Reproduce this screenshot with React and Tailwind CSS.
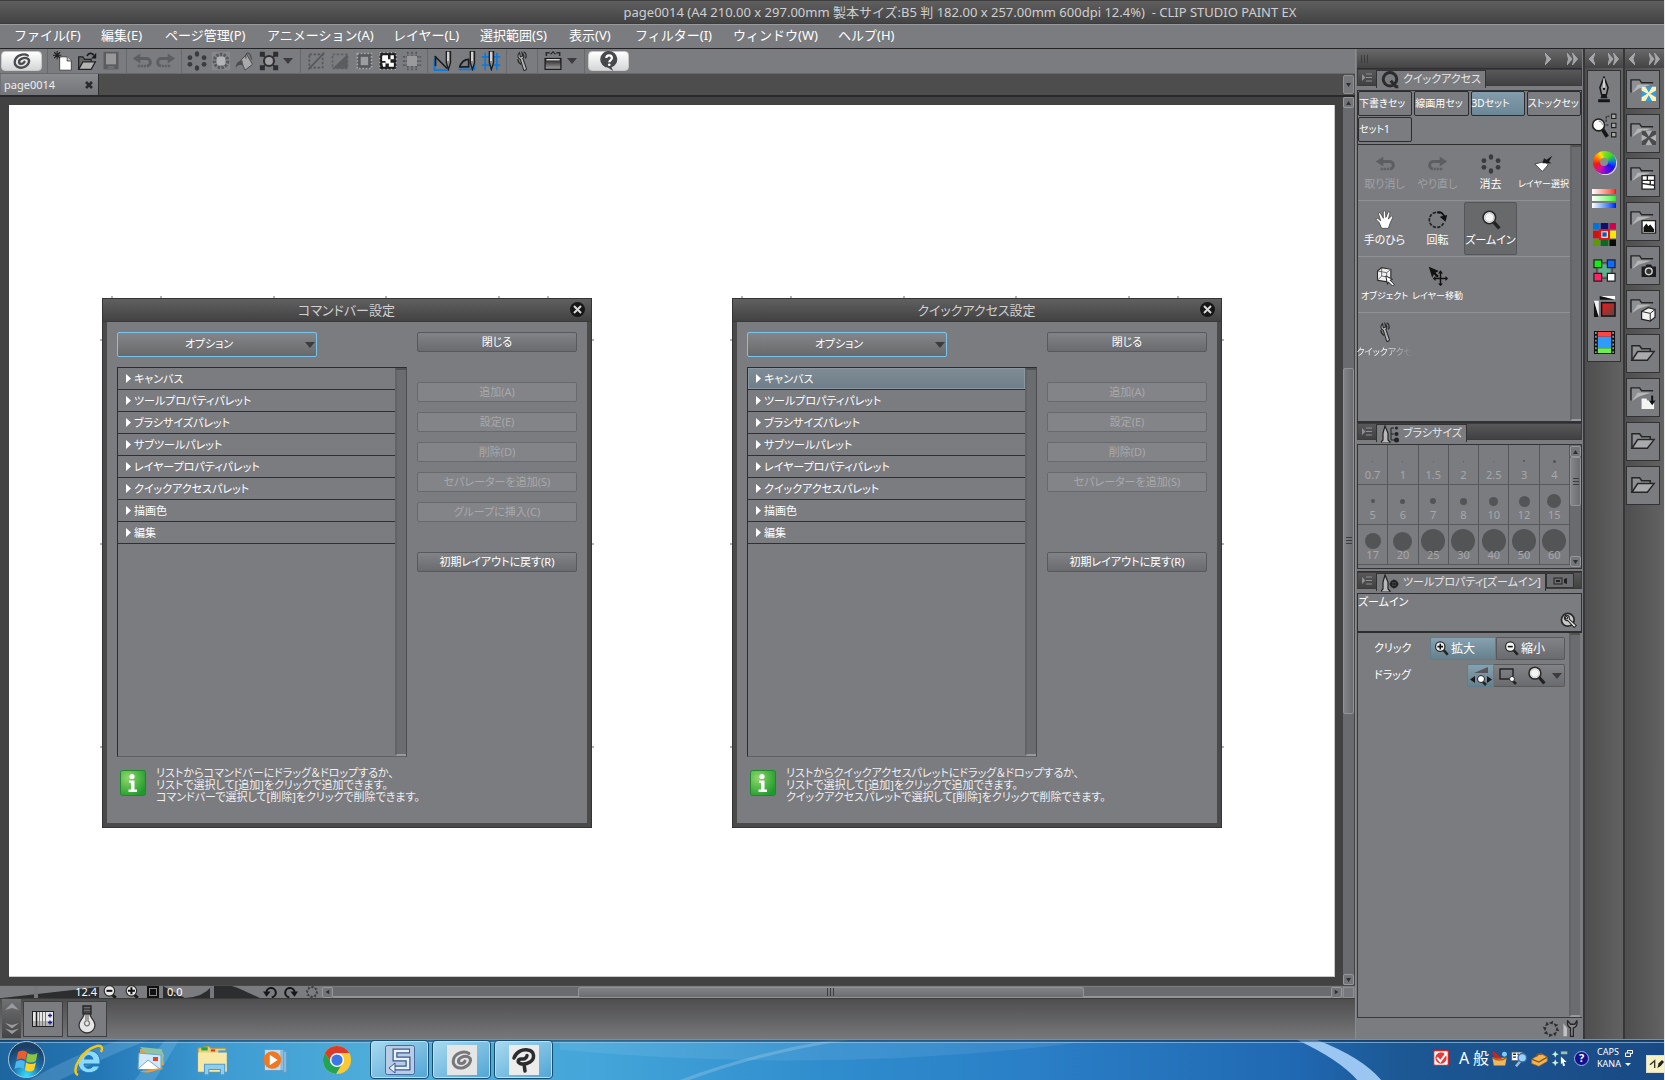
import React from "react";

/* ---------- shared pieces ---------- */

const Svg = ({ s = 20, w, h, vb = "0 0 24 24", children, className = "" }) => (
  <svg width={w || s} height={h || s} viewBox={vb} fill="none" className={"shrink-0 " + className} aria-hidden="true">
    {children}
  </svg>
);

const Caret = ({ className = "text-[#3c3c3e]" }) => (
  <Svg w={10} h={6} vb="0 0 10 6" className={className}>
    <path d="M0 0h10L5 6z" fill="currentColor" />
  </Svg>
);

/* ---------- toolbar icons ---------- */

const Swirl = ({ s = 20, c = "#4a4b4e" }) => (
  <Svg s={s}>
    <path
      d="M19 5.500C14 2 5 5.500 3.500 11.500 2 18 8 21.500 14 19.500c6-2 8.500-8.500 4.500-10.500C14.500 7 8 10 8.500 13.500c.4 2.700 5 2.700 6.500-.5"
      stroke={c}
      strokeWidth="2.800"
      strokeLinecap="round"
    />
  </Svg>
);
const NewIcon = () => (
  <Svg>
    <path d="M8 7h9l5 5v11H8z" fill="#fff" stroke="#333" strokeWidth="1" />
    <path d="M17 7v5h5" fill="#ccc" stroke="#333" />
    <path d="M5 0v10M0 5h10M1.500 1.500l7 7M8.500 1.500l-7 7" stroke="#1e1e1e" strokeWidth="1.300" />
  </Svg>
);
const OpenIcon = () => (
  <Svg>
    <path d="M2 22V7h5l2 3h8v3" fill="#666" stroke="#222" strokeWidth="1.500" />
    <path d="M2 22l5-9h15l-5 9z" fill="#b4b4b4" stroke="#222" strokeWidth="1.500" />
    <path d="M12 6c2-4 6-4 8-1" stroke="#1a1a1a" strokeWidth="2" />
    <path d="M23 2v7h-6z" fill="#1a1a1a" />
  </Svg>
);
const SaveIcon = () => (
  <Svg>
    <path d="M3 1h18v21H3z" fill="#5c5c5f" />
    <path d="M6 3h12v13H6z" fill="#98989b" />
    <path d="M8 18h8v4H8z" fill="#6f6f72" />
  </Svg>
);
const UndoIcon = ({ flip = false }) => (
  <Svg className={flip ? "-scale-x-100" : ""}>
    <path d="M8 9h9a4.500 4.500 0 0 1 1 9" stroke="#5d5e61" strokeWidth="3.500" />
    <path d="M17 18H6" stroke="#5d5e61" strokeWidth="3" strokeDasharray="2.500 1" />
    <path d="M1 9l9-6v12z" fill="#5d5e61" />
  </Svg>
);
const DotsIcon = ({ c = "#3b3b3d", s = 20 }) => (
  <Svg s={s}>
    <g fill={c}>
      <ellipse cx="12" cy="3.500" rx="2.600" ry="3.300" />
      <ellipse cx="12" cy="20.500" rx="2.600" ry="3.300" />
      <circle cx="3.500" cy="8" r="2.900" />
      <circle cx="20.500" cy="8" r="2.900" />
      <circle cx="3.500" cy="16" r="2.900" />
      <circle cx="20.500" cy="16" r="2.900" />
    </g>
  </Svg>
);
const OuterIcon = () => (
  <Svg>
    <rect x="1" y="1" width="22" height="22" fill="#88898c" />
    <circle cx="12" cy="12" r="8" stroke="#5a5b5e" strokeWidth="4" strokeDasharray="3 1.500" />
    <rect x="7" y="7" width="10" height="10" rx="2" fill="#b4b4b6" />
  </Svg>
);
const FillIcon = () => (
  <Svg>
    <path d="M7 11l7-7 7 12-9 7z" fill="#a9a9ab" stroke="#4d4d50" strokeWidth="1.200" />
    <path d="M13 9C12 3 15 1 18 4l2 6" stroke="#4d4d50" strokeWidth="1.500" />
    <path d="M9 11C3 12 1 15 1 20c3-4 5-4 8-3z" fill="#4d4d50" />
  </Svg>
);
const TransformIcon = () => (
  <Svg>
    <circle cx="12" cy="12" r="6" fill="#a0a0a2" stroke="#2f2f31" strokeWidth="2.500" />
    <path d="M7 7L3 3M17 7l4-4M7 17l-4 4M17 17l4 4" stroke="#2f2f31" strokeWidth="2" />
    <g fill="#2f2f31">
      <path d="M1 1h6v6H1zM17 1h6v6h-6zM1 17h6v6H1zM17 17h6v6h-6z" />
    </g>
  </Svg>
);
const DeselIcon = () => (
  <Svg>
    <rect x="4" y="4" width="16" height="16" stroke="#57585b" strokeWidth="2" strokeDasharray="3 2" />
    <path d="M3 22L22 2" stroke="#57585b" strokeWidth="2" />
  </Svg>
);
const InvIcon = () => (
  <Svg>
    <rect x="3" y="4" width="18" height="17" stroke="#606164" strokeWidth="2" strokeDasharray="3 2" />
    <path d="M3 21L21 4v17z" fill="#5b5c5f" />
  </Svg>
);
const DashSq = () => (
  <Svg>
    <rect x="4" y="3" width="17" height="18" fill="#58595c" />
    <rect x="4" y="3" width="17" height="18" stroke="#a5a5a7" strokeWidth="2" strokeDasharray="2 2" />
    <rect x="8" y="7" width="9" height="10" fill="#9d9d9f" />
  </Svg>
);
const MaskIcon = () => (
  <Svg>
    <rect x="2" y="2" width="20" height="20" rx="2" fill="#1f1f20" />
    <path d="M6 5h6v5h3v4h4v5h-6v-4H9v-3H5V6z" fill="#fff" />
    <path d="M15 5h4v5h-4zM5 14h4v5H6z" fill="#fff" />
    <rect x="2" y="2" width="20" height="20" stroke="#b8b9bb" strokeWidth="1.500" strokeDasharray="1.500 3" />
  </Svg>
);
const CropIcon = () => (
  <Svg>
    <path d="M7 1v22M12 1v22M17 1v22M1 7h22M1 12h22M1 17h22" stroke="#4d4d50" strokeWidth="1.500" strokeDasharray="3 1" />
    <rect x="6" y="6" width="12" height="12" fill="#9a9a9c" />
  </Svg>
);
const Nib = ({ x = 0 }) => (
  <g transform={`translate(${x} 0)`}>
    <path d="M16 0h5v14l-2.500 8L16 14z" fill="#8b8b8e" stroke="#1c1c1e" strokeWidth="1.600" />
    <path d="M18 1v11" stroke="#fff" strokeWidth="1.500" />
  </g>
);
const RulerSnap = () => (
  <Svg>
    <path d="M2 9v14h16" stroke="#0b7be0" strokeWidth="2.500" />
    <path d="M3 6v12M2 6l15 15" stroke="#1c1c1e" strokeWidth="2" />
    <Nib />
  </Svg>
);
const CurveSnap = () => (
  <Svg>
    <path d="M2 22h19V14" stroke="#0b7be0" strokeWidth="2" />
    <path d="M3 20C5 13 8 10 14 10v9H4" stroke="#1c1c1e" strokeWidth="2" />
    <Nib />
  </Svg>
);
const GridSnap = () => (
  <Svg>
    <path d="M5 2v21M12 2v21M19 2v21M1 7h22M1 17h22" stroke="#0b7be0" strokeWidth="2" />
    <Nib x={-6} />
  </Svg>
);
const QuickTool = () => (
  <Svg>
    <path d="M9 2c-3 3-2 7 1 8l4 13c2 1 4-1 3-3L13 9c2-2 1-5-1-7l1 4-3 1z" fill="#b7b7b9" stroke="#2a2a2c" strokeWidth="1.300" />
    <path d="M14 1c3 1 4 5 2 8M7 10c0 3 2 5 4 6" stroke="#2a2a2c" strokeWidth="1.500" />
  </Svg>
);
const PaletteIcon = () => (
  <Svg>
    <defs>
      <linearGradient id="pal" x1="0" y1="0" x2="0" y2="1">
        <stop stopColor="#161616" />
        <stop offset="1" stopColor="#a5a5a5" />
      </linearGradient>
    </defs>
    <path d="M4 6V2h4M16 2h4v4" stroke="#29292b" strokeWidth="1.800" />
    <path d="M9 4l3-3 3 3" stroke="#29292b" strokeWidth="1.500" />
    <rect x="2.500" y="9" width="19" height="13" fill="url(#pal)" stroke="#1c1c1c" strokeWidth="1.500" />
    <path d="M4 10.500h16" stroke="#eee" strokeWidth="1.500" />
  </Svg>
);
const HelpIcon = () => (
  <Svg s={20}>
    <path d="M12 0a10 10 0 0 1 3 19.500L17 24l-6-4A10 10 0 0 1 12 0z" fill="#48494c" />
    <path d="M8.800 8.500c0-4.300 6.700-4.300 6.700 0 0 2.500-3 2.300-3.200 5" stroke="#fff" strokeWidth="2.700" />
    <circle cx="12.300" cy="16.500" r="1.600" fill="#fff" />
  </Svg>
);

const toolbar = [
  { sep: 1 },
  { n: "新規", i: <NewIcon /> },
  { n: "開く", i: <OpenIcon /> },
  { n: "保存", i: <SaveIcon /> },
  { sep: 1 },
  { n: "取り消し", i: <UndoIcon /> },
  { n: "やり直し", i: <UndoIcon flip /> },
  { sep: 1 },
  { n: "消去", i: <DotsIcon /> },
  { n: "選択範囲外を消去", i: <OuterIcon /> },
  { n: "塗りつぶし", i: <FillIcon /> },
  { n: "変形", i: <TransformIcon />, caret: 1 },
  { sep: 1 },
  { n: "選択を解除", i: <DeselIcon /> },
  { n: "選択範囲を反転", i: <InvIcon /> },
  { n: "選択範囲の境界線", i: <DashSq /> },
  { n: "クイックマスク", i: <MaskIcon /> },
  { n: "選択範囲を拡張", i: <CropIcon /> },
  { sep: 1 },
  { n: "定規にスナップ", i: <RulerSnap /> },
  { n: "特殊定規にスナップ", i: <CurveSnap /> },
  { n: "グリッドにスナップ", i: <GridSnap /> },
  { sep: 1 },
  { n: "クイックアクセス設定", i: <QuickTool /> },
  { sep: 1 },
  { n: "パレット表示", i: <PaletteIcon />, caret: 1 },
  { sep: 1 },
];

const menus = [
  ["ファイル(F)", "w-[87px]"],
  ["編集(E)", "w-16"],
  ["ページ管理(P)", "w-[102px]"],
  ["アニメーション(A)", "w-[126px]"],
  ["レイヤー(L)", "w-[87px]"],
  ["選択範囲(S)", "w-[89px]"],
  ["表示(V)", "w-[66px]"],
  ["フィルター(I)", "w-[98px]"],
  ["ウィンドウ(W)", "w-[105px]"],
  ["ヘルプ(H)", "w-20"],
];

function Toolbar() {
  return (
    <div className="flex h-[25px] items-center border-b border-[#68696c] bg-[#7b7c80] pl-px">
      <button aria-label="CLIP STUDIO" className="flex h-5 w-[41px] items-center justify-center rounded-sm border border-[#c8c8c8] bg-gradient-to-b from-white to-[#d5d6d8]">
        <Swirl />
      </button>
      <div className="flex items-center pl-0.5">
        {toolbar.map((t, k) =>
          t.sep ? (
            <span key={k} className="mx-[3px] h-6 w-px bg-[#68696c]" />
          ) : (
            <button key={k} aria-label={t.n} className={t.caret ? "flex h-6 w-10 items-center gap-1 pl-0.5" : "flex h-6 w-6 items-center justify-center"}>
              {t.i}
              {t.caret && <Caret />}
            </button>
          )
        )}
      </div>
      <button aria-label="ヘルプ" className="flex h-5 w-[41px] items-center justify-center rounded-sm border border-[#c8c8c8] bg-gradient-to-b from-white to-[#d5d6d8]">
        <HelpIcon />
      </button>
    </div>
  );
}

/* ---------- scroll bar parts ---------- */

const arrowRot = { up: "rotate-180", down: "", left: "rotate-90", right: "-rotate-90" };
const ScrollBtn = ({ dir, label }) => (
  <button aria-label={label} className="flex h-[11px] w-[11px] shrink-0 items-center justify-center rounded-xs border border-[#97989b] bg-[#747578]">
    <Svg w={5} h={4} vb="0 0 5 4" className={arrowRot[dir]}>
      <path d="M0 0h5L2.500 4z" fill="#303032" />
    </Svg>
  </button>
);
const GripV = () => (
  <span className="flex flex-col gap-0.5">
    {[0, 1, 2].map((k) => (
      <span key={k} className="h-px w-1.5 bg-[#3c3c3e]" />
    ))}
  </span>
);
const GripH = () => (
  <span className="flex gap-0.5">
    {[0, 1, 2].map((k) => (
      <span key={k} className="h-2 w-px bg-[#3c3c3e]" />
    ))}
  </span>
);
const EmptyScroll = ({ className = "" }) => (
  <div className={"w-[11px] shrink-0 border-t-2 border-b-2 border-l-2 border-t-[#515254] border-b-[#98999c] border-l-[#626366] bg-[#6b6c6f] " + className} />
);

/* ---------- settings dialogs ---------- */

const categories = ["キャンバス", "ツールプロパティパレット", "ブラシサイズパレット", "サブツールパレット", "レイヤープロパティパレット", "クイックアクセスパレット", "描画色", "編集"];

const DlgButton = ({ children, disabled }) => (
  <button
    disabled={disabled}
    className={
      disabled
        ? "block h-5 w-full rounded-xs border border-[#68696c] bg-[#838487] text-[11px] leading-4 text-[#a8a9ac]"
        : "block h-5 w-full rounded-xs border border-[#58595c] bg-gradient-to-b from-[#828387] to-[#6a6b6e] text-[11px] leading-4 text-white"
    }
  >
    {children}
  </button>
);

const InfoIcon = () => (
  <Svg s={26} vb="0 0 26 26">
    <defs>
      <radialGradient id="info" cx="0.300" cy="0.300" r="0.800">
        <stop stopColor="#8fd86a" />
        <stop offset="1" stopColor="#1f9a2c" />
      </radialGradient>
    </defs>
    <rect x="0.500" y="0.500" width="25" height="25" rx="2" fill="url(#info)" stroke="#1f8a2b" />
    <circle cx="12" cy="6.500" r="2.600" fill="#fff" />
    <path d="M9 10.500h5.500v9H17V22H8.500v-2.500H11v-6.500H9z" fill="#fff" />
  </Svg>
);

function Dialog({ title, buttons, info, selected }) {
  const id = title;
  return (
    <section aria-labelledby={id} className="relative flex w-[490px] shrink-0 flex-col border border-[#343435] bg-[#4a4a4b] [font-feature-settings:'palt']">
      <svg className="absolute -top-[3px] -left-[3px] -z-10" width="494" height="528" viewBox="0 0 494 528" aria-hidden="true">
        <path d="M12 0v4M61 0v4M174 0v4M286 0v4M399 0v4M448 0v4M0 44h4M0 248h4M0 451h4M490 44h4M490 248h4M490 451h4" stroke="#b5b5b5" strokeWidth="2" />
      </svg>
      <header className="flex h-[23px] items-center border-b border-[#3a3a3b] bg-gradient-to-b from-[#606061] to-[#424243] pb-px">
        <h2 id={id} className="flex-1 pl-5 text-center text-[13px] leading-5 font-normal text-[#d0d0d0]">{title}</h2>
        <button aria-label="閉じる" className="mr-1.5 flex h-[15px] w-[15px] items-center justify-center rounded-full bg-[#161616]">
          <Svg s={9} vb="0 0 9 9">
            <path d="M1 1l7 7M8 1L1 8" stroke="#d8d8d8" strokeWidth="2" />
          </Svg>
        </button>
      </header>
      <div className="mx-1 mb-1 flex flex-col bg-[#7b7c80] px-2.5 pt-2.5 pb-5">
        <div className="flex gap-2.5">
          <div className="w-[290px]">
            <div className="relative w-[200px]">
              <select
                aria-label="オプション"
                className="block h-[25px] w-full appearance-none rounded-xs border border-[#79c3ec] bg-gradient-to-b from-[#858689] to-[#68696b] pr-4 text-[11px] text-white [text-align-last:center]"
              >
                <option>オプション</option>
              </select>
              <Caret className="pointer-events-none absolute top-2.5 right-0.5 text-[#3c3c3e]" />
            </div>
            <div className="mt-2.5 flex h-[390px] border border-t-[#2c2c2e] border-r-[#4d4d4f] border-b-[#606164] border-l-[#2c2c2e]">
              <ul className="flex-1">
                {categories.map((c, k) => (
                  <li key={c} className="h-[22px] border-b border-[#303032]">
                    <button
                      className={
                        selected && k === 0
                          ? "flex h-full w-full items-center gap-[3px] border border-[#8a97a0] bg-gradient-to-b from-[#7f8b94] to-[#6f7f89] pl-[7px] text-left text-[11px] leading-4 text-white"
                          : "flex h-full w-full items-center gap-[3px] border border-transparent pl-[7px] text-left text-[11px] leading-4 text-white"
                      }
                    >
                      <Svg w={5} h={9} vb="0 0 5 9">
                        <path d="M0 0l5 4.500L0 9z" fill="#fff" />
                      </Svg>
                      {c}
                    </button>
                  </li>
                ))}
              </ul>
              <EmptyScroll />
            </div>
          </div>
          <div className="flex w-[160px] flex-col">
            <DlgButton>閉じる</DlgButton>
            <div className="mt-[30px] flex h-[140px] flex-col gap-2.5">
              {buttons.map((b) => (
                <DlgButton key={b} disabled>
                  {b}
                </DlgButton>
              ))}
            </div>
            <div className="mt-[30px]">
              <DlgButton>初期レイアウトに戻す(R)</DlgButton>
            </div>
          </div>
        </div>
        <div className="mt-2.5 flex items-start gap-2.5 pl-[3px]">
          <div className="mt-[3px]">
            <InfoIcon />
          </div>
          <p className="text-[11px] leading-3 text-[#f0f0f0]">
            {info.map((l) => (
              <span key={l} className="block whitespace-nowrap">{l}</span>
            ))}
          </p>
        </div>
      </div>
    </section>
  );
}

/* ---------- left-hand workspace ---------- */

const zoomBtn = (sign) => (
  <Svg s={14}>
    <path d="M15 16l7 6" stroke="#1c1c1e" strokeWidth="5" />
    <circle cx="11" cy="10" r="9" fill="#e9e9e9" stroke="#2a2a2c" strokeWidth="2" />
    <path d={sign === "+" ? "M5 10h12M11 4v12" : "M6 10h10"} stroke="#111" strokeWidth="3.500" />
  </Svg>
);
const RotIcon = ({ flip }) => (
  <Svg s={14} className={flip ? "-scale-x-100" : ""}>
    <path d="M6 14a8 8 0 1 1 9 7" stroke="#161618" strokeWidth="3.500" />
    <path d="M0 11h13l-7 9z" fill="#161618" />
  </Svg>
);
const SunIcon = ({ c = "#3a3a3c", s = 14 }) => (
  <Svg s={s}>
    <g fill={c}>
      {[0, 45, 90, 135, 180, 225, 270, 315].map((a) => (
        <path key={a} d="M9 4l6-3-1 5z" transform={`rotate(${a} 12 12)`} />
      ))}
    </g>
  </Svg>
);

const RangeBar = ({ label, value, path, children, end }) => (
  <label className="relative flex h-3 w-[97px] items-center bg-[#7b7c80]">
    <svg className="absolute inset-0 h-full w-full" viewBox="0 0 97 12" preserveAspectRatio="none" aria-hidden="true">
      <path d={path} fill="#2c2d2f" />
    </svg>
    <input
      type="range"
      aria-label={label}
      defaultValue={value}
      className="absolute inset-0 h-3 w-full appearance-none bg-transparent [&::-webkit-slider-thumb]:h-3 [&::-webkit-slider-thumb]:w-1 [&::-webkit-slider-thumb]:appearance-none [&::-webkit-slider-thumb]:bg-[#77787b]"
    />
    <span className={end ? "relative ml-auto pr-0.5 text-[11px] leading-3 text-white" : "relative pl-1 text-[11px] leading-3 text-white"}>{children}</span>
  </label>
);

function StatusBar() {
  return (
    <div className="flex h-[13px] items-center border-t border-[#4a4a4b] bg-[#7b7c80] pl-0.5">
      <RangeBar label="ズーム" value={34} path="M0 12L97 1v11z" end>12.4</RangeBar>
      <div className="flex w-16 items-center justify-around">
        <button aria-label="ズームアウト">{zoomBtn("-")}</button>
        <button aria-label="ズームイン">{zoomBtn("+")}</button>
        <button aria-label="全体表示" className="h-3 w-3 border-2 border-[#111] bg-[#111]">
          <span className="block h-2 w-2 border border-[#888]" />
        </button>
      </div>
      <RangeBar label="回転" value={50} path="M0 0L22 12H0zM22 12Q40 11 48 1Q60-4 75 2L97 12z">0.0</RangeBar>
      <div className="flex w-[62px] items-center justify-around">
        <button aria-label="左回転"><RotIcon /></button>
        <button aria-label="右回転"><RotIcon flip /></button>
        <button aria-label="回転をリセット"><SunIcon /></button>
      </div>
      <ScrollBtn dir="left" label="左へスクロール" />
      <div className="flex h-[11px] flex-1 border-b-2 border-[#949598] bg-[#6a6b6e]">
        <div className="w-[24.5%]" />
        <div className="flex h-[11px] w-[50.8%] items-center justify-center rounded-xs border border-[#929396] bg-gradient-to-b from-[#828387] to-[#6c6d70]">
          <GripH />
        </div>
      </div>
      <ScrollBtn dir="right" label="右へスクロール" />
      <div className="mr-px ml-px h-[11px] w-[11px] border border-[#8d8e91] bg-[#77787b]" />
    </div>
  );
}

function Workspace() {
  return (
    <main className="flex min-w-0 flex-1 flex-col">
      <Toolbar />
      <div className="flex h-[21px] justify-between border-l border-[#6f7073] bg-[#4d4d4e]">
        <div className="flex w-[98px] items-center justify-between border-r border-[#2f2f31] bg-gradient-to-b from-[#8a8b8f] to-[#747579] pr-[3px] pl-[3px]">
          <span className="text-[11px] leading-4 text-[#eeeeee]">page0014</span>
          <button aria-label="page0014を閉じる" className="flex h-3 w-3 items-center justify-center">
            <Svg s={8} vb="0 0 8 8">
              <path d="M1 1l6 6M7 1L1 7" stroke="#29292b" strokeWidth="2.500" />
            </Svg>
          </button>
        </div>
        <button aria-label="タブ一覧" className="mt-px mr-px flex h-[19px] w-[11px] items-center justify-center rounded-xs border border-[#8f9093] bg-[#77787b]">
          <Svg w={5} h={4} vb="0 0 5 4">
            <path d="M0 0h5L2.500 4z" fill="#303032" />
          </Svg>
        </button>
      </div>
      <div className="flex flex-1 border-t-2 border-[#29292c] bg-[#424242]">
        <div className="isolate mt-2 mr-2 mb-2 ml-[9px] flex min-w-0 flex-1 items-start gap-[140px] overflow-hidden border-r border-b border-[#c9c9c9] bg-white pt-[193px] pl-[93px]">
          <Dialog
            title="コマンドバー設定"
            buttons={["追加(A)", "設定(E)", "削除(D)", "セパレーターを追加(S)", "グループに挿入(C)"]}
            info={["リストからコマンドバーにドラッグ＆ドロップするか、", "リストで選択して[追加]をクリックで追加できます。", "コマンドバーで選択して[削除]をクリックで削除できます。"]}
          />
          <Dialog
            title="クイックアクセス設定"
            selected
            buttons={["追加(A)", "設定(E)", "削除(D)", "セパレーターを追加(S)"]}
            info={["リストからクイックアクセスパレットにドラッグ＆ドロップするか、", "リストで選択して[追加]をクリックで追加できます。", "クイックアクセスパレットで選択して[削除]をクリックで削除できます。"]}
          />
        </div>
        <div className="mr-px flex w-[11px] flex-col bg-[#6a6b6e]">
          <ScrollBtn dir="up" label="上へスクロール" />
          <div className="flex flex-1 flex-col">
            <div className="h-[30%]" />
            <div className="flex h-[40%] items-center justify-center rounded-xs border border-[#929396] bg-gradient-to-r from-[#828387] to-[#6c6d70]">
              <GripV />
            </div>
          </div>
          <ScrollBtn dir="down" label="下へスクロール" />
        </div>
      </div>
      <StatusBar />
      <div className="flex h-[41px] items-center border-t border-[#3c3c3d] bg-gradient-to-b from-[#4e4e4f] to-[#77787b] pb-px pl-0.5">
        <button aria-label="パレットドックを開く" className="flex h-full w-[19px] flex-col items-center justify-between bg-gradient-to-b from-[#707174] to-[#444445] py-1">
          <Svg w={14} h={7} vb="0 0 14 7"><path d="M0 7l7-7 7 7-7-2z" fill="#9a9b9e" /></Svg>
          <Svg w={14} h={11} vb="0 0 14 11"><path d="M0 0l7 2 7-2-7 5.500zM0 5.500l7 2 7-2-7 5.500z" fill="#9a9b9e" /></Svg>
        </button>
        <button aria-label="タイムライン" className="ml-0.5 flex h-9 w-10 items-center justify-center border border-[#3f3f41] bg-[#7b7c80]">
          <Svg w={22} h={16} vb="0 0 22 16">
            <rect x="0.500" y="0.500" width="21" height="15" fill="#e8e8e8" stroke="#222" />
            <path d="M1 10h20v5H1z" fill="#b5b5b5" />
            <path d="M4.500 1v14" stroke="#222" strokeWidth="1.500" />
            <path d="M7.500 1v14M10.500 1v14M13.500 1v14" stroke="#777" />
            <path d="M16 4.500h4M18 2.500v4M16 11.500h4M18 9.500v4" stroke="#1c1c8c" strokeWidth="1.300" />
          </Svg>
        </button>
        <button aria-label="ヒント" className="ml-1 flex h-9 w-10 items-center justify-center border border-[#3f3f41] bg-[#7b7c80]">
          <Svg w={20} h={30} vb="0 0 20 30">
            <path d="M6 2h8v8H6z" fill="#6a6b6e" stroke="#222" strokeWidth="1.300" />
            <path d="M6 5h8M6 8h8" stroke="#222" />
            <path d="M7 10h6c0 4 5 6 5 11a8 8 0 0 1-16 0c0-5 5-7 5-11z" fill="#e6e6e6" stroke="#333" strokeWidth="1.300" />
            <path d="M9 11v6a2.500 2.500 0 1 0 2 0v-6" stroke="#777" strokeWidth="1.300" />
          </Svg>
        </button>
      </div>
    </main>
  );
}

/* ---------- palettes ---------- */

const ChevR = ({ dbl, left }) => (
  <Svg w={dbl ? 11 : 6} h={12} vb={dbl ? "0 0 11 12" : "0 0 6 12"} className={left ? "-scale-x-100" : ""}>
    <path d={dbl ? "M0 0l5 6-5 6 1.500-6zM5.500 0l5 6-5 6L7 6z" : "M0 0l6 6-6 6 2-6z"} fill="#a5a6a9" stroke="#a5a6a9" />
  </Svg>
);

const PaletteHeader = ({ icon, title, extra }) => (
  <div className="flex h-[22px] flex-col border-t border-[#2e2e30] bg-[#7b7c80]">
    <div className="flex h-[17px] border border-[#3c3c3d] bg-gradient-to-b from-[#58585a] to-[#414142]">
      <button aria-label={title + "のメニュー"} className="flex w-[18px] items-center justify-center">
        <Svg w={10} h={9} vb="0 0 10 9">
          <path d="M0 1l3.500 3.500L0 8z" fill="#8e8f92" />
          <path d="M4 1h6M4 4.500h6M4 8h6" stroke="#8e8f92" />
        </Svg>
      </button>
      <div className="flex h-[18px] items-center gap-1 border border-b-0 border-[#333335] bg-[#7b7c80] pr-1 pl-1">
        {icon}
        <h2 className="pb-0.5 text-[11px] leading-4 font-normal whitespace-nowrap text-[#e6e6e6] [font-feature-settings:'palt']">{title}</h2>
      </div>
      {extra}
    </div>
  </div>
);

const Hand = () => (
  <Svg>
    <path d="M8 22l-3-7-4-4 2-1 4 3L4 4l2-1 4 7V1h2.500l.5 8 3-7 2 1-2 8 4-4 1.500 1.500L18 16l-2 6z" fill="#fff" stroke="#333" strokeWidth="0.800" />
  </Svg>
);
const Rotate = () => (
  <Svg>
    <path d="M15 4A9 9 0 1 0 19 15" stroke="#222224" strokeWidth="2" strokeDasharray="4 1.500" />
    <path d="M11 3q6-2 9 6" stroke="#111" strokeWidth="2" />
    <path d="M14 8l9-2-2 8z" fill="#111" />
  </Svg>
);
const Lens = ({ s = 20, sign = "" }) => (
  <Svg s={s}>
    <path d="M14 13l8 9" stroke="#222224" strokeWidth="4" />
    <circle cx="10" cy="9" r="7.500" fill="#f5f5f5" stroke="#2a2a2c" strokeWidth="2" />
    {sign ? (
      <path d={sign === "+" ? "M5.500 9h9M10 4.500v9" : "M6 9h8"} stroke="#111" strokeWidth="2.500" />
    ) : (
      <circle cx="10" cy="9" r="5.300" stroke="#bdbdbd" strokeWidth="1" />
    )}
  </Svg>
);
const LayerSel = () => (
  <Svg>
    <path d="M1 12l12-3 4 4-7 8z" fill="#fff" stroke="#333" />
    <path d="M10 11l2-6 3 2 7-5-4 7 3 2z" fill="#1b1b1d" />
  </Svg>
);
const Cube = () => (
  <Svg>
    <path d="M3 6l5-4 11 2v10l-4 5-12-2z" fill="#f0f0f0" stroke="#28282a" strokeWidth="1.300" />
    <path d="M3 6l11 2 5-4M14 8v10M8 2v10l-5 5M8 12l11 2" stroke="#555" strokeWidth="1" />
    <path d="M13 12l8 4-3 1 5 5-2 2-5-5-1 3z" fill="#fff" stroke="#111" />
  </Svg>
);
const MoveIcon = () => (
  <Svg>
    <path d="M1 1l12 5-4 2 4 4-2 2-4-4-2 4z" fill="#111" />
    <path d="M15 7v16M7 15h16" stroke="#111" strokeWidth="1.800" />
    <path d="M12 9l3-4 3 4zM12 21l3 3 3-3zM9 12l-3 3 3 3zM21 12l3 3-3 3z" fill="#111" />
  </Svg>
);

const quick = [
  [
    { n: "取り消し", i: <UndoIcon />, off: 1 },
    { n: "やり直し", i: <UndoIcon flip />, off: 1 },
    { n: "消去", i: <DotsIcon /> },
    { n: "レイヤー選択", i: <LayerSel />, sm: 1 },
  ],
  [
    { n: "手のひら", i: <Hand /> },
    { n: "回転", i: <Rotate /> },
    { n: "ズームイン", i: <Lens />, on: 1 },
  ],
  [
    { n: "オブジェクト", i: <Cube />, sm: 1 },
    { n: "レイヤー移動", i: <MoveIcon />, sm: 1 },
  ],
  [{ n: "クイックアクセ", i: <QuickTool />, sm: 1, fade: 1 }],
];

const brushes = [
  ["0.7", 1], ["1", 1], ["1.5", 1], ["2", 1], ["2.5", 1], ["3", 2], ["4", 3],
  ["5", 4], ["6", 5], ["7", 6], ["8", 7], ["10", 9], ["12", 11], ["15", 14],
  ["17", 16], ["20", 19], ["25", 24], ["30", 24], ["40", 24], ["50", 24], ["60", 24],
];

const NibSmall = () => <path d="M4 1l3 7v7l2 2v1H0v-1l2-2V8z" fill="#b9b9bb" stroke="#222" strokeWidth="1.200" />;

function Palettes() {
  return (
    <aside className="flex w-[228px] shrink-0 flex-col border-l border-[#8a8b8e] bg-[#7b7c80] px-px">
      <div className="flex h-[19px] items-center justify-between bg-gradient-to-b from-[#69696b] to-[#444445] px-1">
        <GripH />
        <div className="flex items-center gap-4">
          <ChevR />
          <ChevR dbl />
        </div>
      </div>

      {/* quick access */}
      <PaletteHeader
        title="クイックアクセス"
        icon={
          <Svg s={18}>
            <circle cx="12" cy="11" r="9" stroke="#2c2c2e" strokeWidth="4" />
            <path d="M13 13l7 8h3" stroke="#2c2c2e" strokeWidth="4" />
          </Svg>
        }
      />
      <div className="flex h-[332px] flex-col border border-[#333335]">
        <div role="tablist" className="grid grid-cols-4 gap-x-0.5 gap-y-px border-b border-[#2e2e30] pb-0.5">
          {["下書きセッ", "線画用セッ", "3Dセット", "ストックセッ", "セット1"].map((t, k) => (
            <button
              key={t}
              role="tab"
              aria-selected={k === 2}
              className={
                "h-[25px] rounded-xs border border-[#2c2c2e] text-left text-[10px] whitespace-nowrap text-white [font-feature-settings:'palt'] " +
                (k === 2 ? "bg-gradient-to-b from-[#849cab] to-[#6b8797]" : "bg-[#7b7c80]")
              }
            >
              {t}
            </button>
          ))}
        </div>
        <div className="flex flex-1">
          <div className="flex-1">
            {quick.map((row, r) => (
              <div key={r} className={"grid h-14 grid-cols-4 " + (r < 3 ? "border-b border-[#8f9093]" : "")}>
                {row.map((q) => (
                  <button
                    key={q.n}
                    disabled={!!q.off}
                    className={
                      "my-px flex min-w-0 flex-col items-center justify-center gap-0.5 rounded-xs border [font-feature-settings:'palt'] " +
                      (q.on ? "border-[#55565a] bg-[#68696b] " : "border-transparent ") +
                      (q.off ? "text-[#a0a1a4]" : "text-white")
                    }
                  >
                    {q.i}
                    <span
                      className={
                        "leading-4 whitespace-nowrap " +
                        (q.sm ? "text-[9px]" : "text-[11px]") +
                        (q.fade ? " bg-gradient-to-r from-white from-50% to-[#7b7c80] bg-clip-text text-transparent" : "")
                      }
                    >
                      {q.n}
                    </span>
                  </button>
                ))}
              </div>
            ))}
          </div>
          <EmptyScroll />
        </div>
      </div>

      {/* brush size */}
      <PaletteHeader
        title="ブラシサイズ"
        icon={
          <Svg w={18} h={18} vb="0 0 18 18">
            <NibSmall />
            <path d="M13 3h-3v12h3M10 9h3" stroke="#222" />
            <circle cx="15.500" cy="3" r="1.500" fill="#222" />
            <circle cx="15.500" cy="9" r="2" fill="#222" />
            <circle cx="15.500" cy="15" r="2.500" fill="#222" />
          </Svg>
        }
      />
      <div className="flex h-[125px] border border-[#333335]">
        <div className="grid flex-1 auto-rows-[40px] grid-cols-7 overflow-hidden">
          {brushes.map(([n, d]) => (
            <button key={n} className="relative flex flex-col items-center justify-end border-r border-b border-[#57585b] pb-px">
              <span className="absolute inset-x-0 top-0 flex h-8 items-center justify-center">
                <span className="rounded-full bg-[#535456]" style={{ width: d, height: d }} />
              </span>
              <span className="relative text-[11px] leading-4 text-[#a7a8aa]">{n}</span>
            </button>
          ))}
        </div>
        <div className="flex w-[11px] flex-col bg-[#6a6b6e] py-px">
          <ScrollBtn dir="up" label="上へ" />
          <div className="flex h-[49px] items-center justify-center rounded-xs border border-[#929396] bg-gradient-to-r from-[#858689] to-[#6c6d70]">
            <GripV />
          </div>
          <span className="flex-1" />
          <ScrollBtn dir="down" label="下へ" />
        </div>
      </div>

      {/* tool property */}
      <div className="mt-0.5">
        <PaletteHeader
          title="ツールプロパティ[ズームイン]"
          icon={
            <Svg w={18} h={18} vb="0 0 18 18">
              <NibSmall />
              <circle cx="13" cy="10" r="3" stroke="#222" strokeWidth="2" />
              <path d="M13 5.500v9M8.500 10h9" stroke="#222" strokeWidth="1.300" />
            </Svg>
          }
          extra={
            <div className="flex w-7 items-center justify-center border border-[#333335] bg-[#6c6d70]">
              <Svg w={14} h={8} vb="0 0 14 8">
                <rect x="1" y="1" width="8" height="6" stroke="#222" />
                <path d="M3 3h4v2H3zM11 2l3-1v6l-3-1z" fill="#222" />
              </Svg>
            </div>
          }
        />
      </div>
      <div className="relative h-10 border border-b-2 border-[#2e2e30]">
        <p className="text-[11px] leading-4 text-white [font-feature-settings:'palt']">ズームイン</p>
        <button aria-label="サブツール詳細" className="absolute right-1 bottom-0.5">
          <Svg s={17}>
            <circle cx="11" cy="11" r="9" fill="#c8c8ca" stroke="#2a2a2c" strokeWidth="2.500" />
            <path d="M7 6c-2 3 0 7 4 6l9 10 3-3-10-9c1-4-2-6-5-5l3 3-1 2-2 0z" fill="#e2e2e2" stroke="#222" strokeWidth="1.500" />
          </Svg>
        </button>
      </div>
      <div className="flex flex-1 border-b border-l border-[#3a3a3c]">
        <div className="flex flex-1 flex-col gap-1 pt-1 pr-1 pl-4 text-xs text-white [font-feature-settings:'palt']">
          <div className="flex h-[23px] items-center justify-between">
            <span className="text-[11px]">クリック</span>
            <div className="flex h-full">
              <button className="flex w-[66px] items-center gap-0.5 rounded-l-xs border border-[#5e7d8d] bg-gradient-to-b from-[#86a1b0] to-[#67808e] pl-[3px]">
                <Lens s={15} sign="+" />
                拡大
              </button>
              <button className="flex w-[69px] items-center gap-0.5 rounded-r-xs border border-[#59595c] bg-gradient-to-b from-[#828387] to-[#6a6b6e] pl-[7px]">
                <Lens s={15} sign="-" />
                縮小
              </button>
            </div>
          </div>
          <div className="flex h-[23px] items-center justify-between">
            <span className="text-[11px]">ドラッグ</span>
            <div className="flex h-full">
              <button aria-label="ズーム" className="flex w-[27px] items-center justify-center rounded-l-xs border border-[#5e7d8d] bg-gradient-to-b from-[#86a1b0] to-[#67808e]">
                <Svg w={22} h={20} vb="0 0 22 20">
                  <path d="M4 7L18 1v6z" fill="#55565a" />
                  <path d="M5 10v7l-5-3.500zM17 10v7l5-3.500z" fill="#1b1b1d" />
                  <path d="M12 15l4 4" stroke="#222" strokeWidth="2.500" />
                  <circle cx="11" cy="13" r="3.500" fill="#fff" stroke="#222" />
                </Svg>
              </button>
              <div className="flex items-center rounded-r-xs border border-l-0 border-[#59595c] bg-gradient-to-b from-[#828387] to-[#6a6b6e]">
                <button aria-label="範囲" className="flex w-7 justify-center">
                  <Svg w={18} h={18} vb="0 0 18 18">
                    <rect x="1" y="2" width="13" height="10" stroke="#1f1f21" strokeWidth="1.400" />
                    <path d="M14 14l3 3" stroke="#222" strokeWidth="2.500" />
                    <circle cx="13" cy="12" r="2.500" fill="#fff" stroke="#333" />
                  </Svg>
                </button>
                <button aria-label="回転" className="flex w-7 justify-center"><Lens s={19} /></button>
                <button aria-label="その他" className="flex w-3.5 justify-center"><Caret /></button>
              </div>
            </div>
          </div>
        </div>
        <EmptyScroll className="mr-0.5" />
      </div>
      <div className="flex h-[21px] items-center justify-end gap-0.5 pr-[3px]">
        <button aria-label="すべて初期設定"><SunIcon s={18} c="#2e2e30" /></button>
        <button aria-label="設定">
          <Svg s={17}>
            <path d="M2 3c0 5 5 5 5 9v11H2z" fill="#c2c2c4" />
            <path d="M8 1c-1 6 1 9 4 10v12h4V11c4-1 6-4 5-10l-3 5h-6z" fill="#8a8a8d" stroke="#252527" strokeWidth="1.800" />
          </Svg>
        </button>
      </div>
    </aside>
  );
}

const stripIcons = [
  ["ツール", <Svg s={28}><path d="M12 1l3.500 9-1.500 6h-4l-1.500-6z" fill="#98989b" stroke="#161618" strokeWidth="1.300" /><path d="M12 2v9" stroke="#fff" /><circle cx="12" cy="11" r="1" fill="#111" /><path d="M10 16h4l1 3H9zM7 20h10v2.500H7z" fill="#161618" /></Svg>],
  ["サブツール", <Svg s={26}><path d="M10 14l5 8" stroke="#161618" strokeWidth="3.500" /><circle cx="7" cy="11" r="5.500" fill="#fff" stroke="#222" strokeWidth="1.500" /><path d="M7 7.500a3.500 3.500 0 0 1 3.500 3.500" stroke="#999" /><path d="M14 8V3h3M14 11h3" stroke="#222" strokeDasharray="2 1" /><path d="M19 1h4v4h-4zM19 9.500h4v4h-4zM19 18h4v4h-4z" fill="#aaa" stroke="#222" /></Svg>],
  ["カラーサークル", null],
  ["カラースライダー", null],
  ["カラーセット", <Svg s={23} vb="0 0 21 21"><path d="M0 0h6v6H0z" fill="#0072d8" /><path d="M7 0h7v6H7z" fill="#10106a" /><path d="M15 0h6v6h-6z" fill="#d2004f" /><path d="M0 7h6v7H0z" fill="#cf1212" /><path d="M15 7h6v7h-6z" fill="#ffe600" /><path d="M0 15h6v6H0z" fill="#5a9c00" /><path d="M7 15h7v6H7z" fill="#0b6a1c" /><path d="M15 15h6v6h-6z" fill="#0a0a0a" /><rect x="6.500" y="6.500" width="8" height="8" fill="#fff" stroke="#e11" strokeWidth="2" /><rect x="8.500" y="8.500" width="4" height="4" fill="#0b5cab" /></Svg>],
  ["中間色", <Svg s={23}><path d="M6 6h12v12H6z" fill="#5fb08d" /><path d="M4 9v6M20 9v6M9 4h6M9 20h6" stroke="#333" /><path d="M1 1h8v8H1z" fill="#12f012" stroke="#222" strokeWidth="1.300" /><path d="M15 1h8v8h-8z" fill="#0d6bff" stroke="#222" strokeWidth="1.300" /><path d="M1 15h8v8H1z" fill="#ff2466" stroke="#222" strokeWidth="1.300" /><path d="M15 15h8v8h-8z" fill="#fff" stroke="#222" strokeWidth="1.300" /></Svg>],
  ["近似色", <Svg s={23}><defs><linearGradient id="app" x2="1" y2="1"><stop stopColor="#ff1616" /><stop offset="1" stopColor="#4a4a4a" /></linearGradient></defs><path d="M7 1h16v4z" fill="#fff" /><path d="M7 5V1l16 4z" fill="#111" /><path d="M1 6v17h5z" fill="#111" /><path d="M1 6h5v17z" fill="#f3f3f3" /><rect x="9" y="8" width="14" height="14" fill="url(#app)" stroke="#111" strokeWidth="1.500" /></Svg>],
  ["カラーヒストリー", <Svg s={23}><path d="M1 0h22v24H1z" fill="#111" /><path d="M5 1h14v5H5z" fill="#f44" /><path d="M5 6h14v12H5z" fill="#2f9bff" /><path d="M5 18h14v5H5z" fill="#6df04c" /><path d="M3 1v22M21 1v22" stroke="#aaa" strokeWidth="1.500" strokeDasharray="2 2" /></Svg>],
];

const Folder = ({ open }) => (
  <>
    <path d={open ? "M2 20V5h8l2 3h9v3" : "M1 16V3h9l2 3h12"} fill="#8f9093" stroke="#252527" strokeWidth="1.500" />
    {open ? <path d="M2 20l6-9h17l-7 9z" fill="#a9aaac" stroke="#252527" strokeWidth="1.500" /> : <path d="M2 17L8 8h14L9 12z" fill="#b5b6b8" />}
  </>
);
const petals = "M12 10h4l3.500 6 3.500-6h4v4l-6 3.500 6 3.500v4h-4l-3.500-6-3.500 6h-4v-4l6-3.500-6-3.500z";
const folderOverlays = [
  <g><path d="M12 10h15v15H12z" fill="#2f9fe0" /><path d={petals} fill="#fdf1b8" /></g>,
  <g><path d="M12 10h15v15H12z" fill="#b0b1b3" /><path d={petals} fill="#4a4b4d" /></g>,
  <g><path d="M12.500 11h13v14h-13zM18 11v5M12 16h14M12 19l13 2M21 16v4" fill="#fff" stroke="#222" strokeWidth="1.400" /></g>,
  <g><path d="M12.500 12h14v13h-14z" fill="#fff" stroke="#222" strokeWidth="1.400" /><path d="M14 24v-5l3-4 2 3 2-2 4 5v3z" fill="#111" /></g>,
  <g><path d="M12 14h4l1-2h5l1 2h4v11H12z" fill="#1d1d1f" /><circle cx="19.500" cy="19" r="3.500" stroke="#d0d0d0" strokeWidth="1.500" fill="#333" /></g>,
  <g><path d="M12 15l7-4 7 2v8l-5 4-9-2z" fill="#f2f2f2" stroke="#222" strokeWidth="1.300" /><path d="M12 15l9 2 5-4M21 17v8" stroke="#222" /></g>,
  null,
  <g><path d="M12 14h5l1 2h7v9H12z" fill="#f4f4f4" /><path d="M23 11v6" stroke="#111" strokeWidth="2" /><path d="M19.500 16h7L23 21z" fill="#111" /></g>,
  null,
  null,
];

function Strips() {
  return (
    <>
      <div className="flex w-10 shrink-0 flex-col border-l-2 border-[#37373a] bg-gradient-to-r from-[#4e4e4f] to-[#626263]">
        <div className="flex h-[19px] items-center justify-between bg-gradient-to-b from-[#69696b] to-[#444445] px-1">
          <ChevR left />
          <ChevR dbl />
        </div>
        <div className="mx-0.5 mt-0.5 flex flex-col border border-[#323234] bg-[#7b7c80] py-px">
          {stripIcons.map(([n, icon], k) => (
            <button key={n} aria-label={n} className="flex h-9 items-center justify-center">
              {k === 2 ? (
                <span className="flex h-[23px] w-[23px] items-center justify-center rounded-full bg-[conic-gradient(#7ee01e,#3fdc1e_40deg,#0a7ad8_85deg,#1a10ff_120deg,#6a10e0_170deg,#d012a8_210deg,#f01616_260deg,#ff7a00_300deg,#ffe100_335deg,#7ee01e)] shadow-[1px_1px_0_#ddd]">
                  <span className="h-2 w-2 rounded-full bg-[#8b8c8f]" />
                </span>
              ) : k === 3 ? (
                <span className="flex flex-col gap-0.5">
                  <span className="h-[5px] w-6 bg-gradient-to-r from-white to-[#f00]" />
                  <span className="h-[5px] w-6 bg-gradient-to-r from-white to-[#0e0]" />
                  <span className="h-[5px] w-6 bg-gradient-to-r from-white to-[#00f]" />
                </span>
              ) : (
                icon
              )}
            </button>
          ))}
        </div>
      </div>
      <div className="flex w-[41px] shrink-0 flex-col border-l-2 border-[#37373a] bg-gradient-to-r from-[#4e4e4f] to-[#626263]">
        <div className="flex h-[19px] items-center justify-between bg-gradient-to-b from-[#69696b] to-[#444445] px-1">
          <ChevR left />
          <ChevR dbl />
        </div>
        <div className="mt-0.5 flex flex-col gap-[5px] pr-1 pl-px">
          {folderOverlays.map((o, k) => (
            <button key={k} aria-label={"素材フォルダー" + (k + 1)} className="flex h-[39px] items-center justify-center border border-[#323234] bg-[#7b7c80]">
              <Svg w={27} h={26} vb="0 0 28 27">
                <Folder open={!o} />
                {o}
              </Svg>
            </button>
          ))}
        </div>
      </div>
    </>
  );
}

/* ---------- task bar ---------- */

const taskIcons = [
  ["Internet Explorer", <Svg s={32} vb="0 0 32 32"><path d="M27 20H11c0 5 7 6 9 2h6.500C23 32 5 31 5 18S25 2 27 16z" fill="#8bdafa" stroke="#1b7cc0" strokeWidth="1" /><path d="M11 15.500h9.500c-1-6-8.500-6-9.500 0z" fill="#1d78bb" /><path d="M5 31C-3 27 9 6 24 2c5-1 6 2 4 6" stroke="#f5c61a" strokeWidth="2.500" /></Svg>],
  ["メール", <Svg s={32} vb="0 0 32 32"><path d="M5 5l22 0 2 16H5z" fill="#e5a13a" /><path d="M5 3l20 2 4 6-3 14z" fill="#8dc3a4" /><path d="M4 9l22 2v14H3z" fill="#cfe9fa" stroke="#6ba4c8" /><path d="M3 25l10-9 12 9" stroke="#78a8c8" fill="#fff" /><path d="M18 13h5v4h-5z" fill="#e2432a" /><path d="M1 25c8 6 18-3 28 0-10 0-16 8-28 0z" fill="#f29a2c" /></Svg>],
  ["エクスプローラー", <Svg s={34} vb="0 0 32 32"><path d="M2 5l10-2 2 2h14v22H2z" fill="#e8cf79" stroke="#b89840" /><path d="M5 4h6v3H5z" fill="#22a53a" /><path d="M14 6h4v2h-4z" fill="#d33" /><path d="M21 7h7v3h-7z" fill="#3a9de8" /><path d="M2 9h27v18H2z" fill="#f7e8a5" /><path d="M8 30V20h19v10h-4v-5H12v5z" fill="#8dcdf0" stroke="#4e9bc8" /></Svg>],
  ["Windows Media Player", <Svg s={28} vb="0 0 32 32"><path d="M4 4h19v24H4z" fill="#b9ddf4" stroke="#5f9dc8" /><path d="M23 4h3v24h-3M26 6h3v24h-3" fill="#8cc0e2" stroke="#5f9dc8" /><circle cx="13" cy="16" r="10" fill="#f07820" /><path d="M10 10l9 6-9 6z" fill="#fff" /></Svg>],
  ["Google Chrome", <Svg s={30} vb="0 0 32 32"><circle cx="16" cy="16" r="15" fill="#fcc934" /><path d="M3 8.500A15 15 0 0 1 29 8.500H16L10 19z" fill="#de3a2b" /><path d="M3 8.500A15 15 0 0 0 15 31l7-12-12 0z" fill="#23a455" /><circle cx="16" cy="16" r="7.500" fill="#fff" /><circle cx="16" cy="16" r="6" fill="#3b78e7" /></Svg>],
];

const runIcons = [
  ["S", <Svg s={30} vb="0 0 30 30"><rect x="0.500" y="0.500" width="29" height="29" rx="2" fill="#b9cce6" stroke="#456ba0" /><path d="M25 6H10v8h13v9H8" stroke="#34598f" strokeWidth="5" /><path d="M24 6H10v8h13v9H8" stroke="#e9f1fb" strokeWidth="2.500" /><path d="M10 18l-6 5 6 5z" fill="#e9f1fb" stroke="#34598f" /></Svg>],
  ["CLIP STUDIO", <Svg s={30} vb="0 0 30 30"><path d="M0 0h30v30H0z" fill="#e6e6e6" /><g transform="translate(3 3)"><path d="M19 5.500C14 2 5 5.500 3.500 11.500 2 18 8 21.500 14 19.500c6-2 8.500-8.500 4.500-10.500C14.500 7 8 10 8.500 13.500c.4 2.700 5 2.700 6.500-.5" stroke="#77787b" strokeWidth="3" strokeLinecap="round" /></g></Svg>],
  ["CLIP STUDIO PAINT", <Svg s={30} vb="0 0 30 30"><path d="M0 0h30v30H0z" fill="#ececec" /><path d="M5 13C7 7 13 4 19 5c7 1 7 9 2 12-3 2-7 2.500-10 1.500-3-1.500-2-4.500 1-4.500 3 .5 6-1 6-3.500M15 19l1 7" stroke="#2c2c2e" strokeWidth="3.500" strokeLinecap="round" /></Svg>],
];

const trayIcons = [
  ["IMEパッド", <Svg s={17}><path d="M2 11h20l-2 11H4z" fill="#f0b85c" /><path d="M3 3l9 8H7z" stroke="#c22" strokeWidth="3" /><circle cx="19" cy="6" r="3.500" fill="#7ecbf5" /><path d="M2 11q10 6 20 0" stroke="#a56a1c" strokeWidth="2" /></Svg>],
  ["検索", <Svg s={17}><path d="M1 3h15v12H1z" fill="#fff" stroke="#555" /><path d="M3 6h4M3 10h4M9 6h2" stroke="#222" strokeWidth="2" /><path d="M13 16l-6 7" stroke="#9db7d6" strokeWidth="3.500" /><circle cx="16" cy="11" r="6" fill="#9fd0f5" stroke="#2f6fb8" strokeWidth="2" /></Svg>],
  ["ツール", <Svg s={17}><path d="M1 13l13-8 9 5v6l-12 7-10-4z" fill="#f2b455" stroke="#a56a1c" /><path d="M1 13l10 4 12-7M8 9c0-4 5-5 7-2" stroke="#8a5714" strokeWidth="2" /></Svg>],
  ["キーボード", <Svg s={17}><path d="M6 1l1.500 3.500L11 6 7.500 7.500 6 11 4.500 7.500 1 6l3.500-1.500zM6 13l1.500 3.500L11 18l-3.500 1.500L6 23l-1.500-3.500L1 18l3.500-1.500z" fill="#c9f3df" /><path d="M14 2h9v4h-9z" fill="#9bbfa8" /><path d="M14 9l8 8h-4l2 5-3 1-1-5-2 2z" fill="#fff" /></Svg>],
];

function Taskbar() {
  return (
    <footer className="relative isolate flex h-[41px] items-center justify-between overflow-hidden border-t border-[#37a3e2] bg-[linear-gradient(90deg,#1d659f,#2477b5_6%,#3d9bd2_13%,#52b0dc_24%,#43a5d9_36%,#2f8ccd_50%,#2a7fc6_62%,#2068b2_78%,#1c5894_84%,#194a85)]">
      <svg className="absolute inset-0 -z-10 h-full w-full" viewBox="0 0 1665 41" preserveAspectRatio="none" aria-hidden="true">
        <path d="M1298 0h20q45 18 64 41h-24Q1340 20 1298 0z" fill="#a9d2fa" opacity="0.900" />
        <path d="M560 10Q840 36 1100 0H560z" fill="#fff" opacity="0.080" />
        <path d="M690 41Q760 14 850 0h-20Q750 14 680 41z" fill="#fff" opacity="0.180" />
        <path d="M60 41Q120 10 150 0h-30Q70 16 30 41zM165 0h14l-24 41h-20z" fill="#bfe7ff" opacity="0.180" />
        <path d="M0 1h1665" stroke="#0d2c4b" strokeWidth="1" />
        <path d="M0 2.500h1665" stroke="#9fc7e6" strokeWidth="1" opacity="0.700" />
      </svg>
      <div className="flex h-full items-center pb-px">
        <button aria-label="スタート" className="ml-2 flex h-[37px] w-[37px] items-center justify-center rounded-full border border-[#a9c9dd] bg-[radial-gradient(circle_at_50%_95%,#35e0ff,#1b6ca8_40%,#1c3f66_75%)]">
          <Svg s={26} vb="0 0 26 26">
            <path d="M4 5q5-3 9 0l-1.500 8q-4-3-9 0z" fill="#ee5b2c" />
            <path d="M13.500 6q5 3 10 0L22 14q-5 3-10 0z" fill="#8cc63e" />
            <path d="M2 14.500q5-3 9 0L9.500 22q-4-3-9 0z" fill="#4db6ee" />
            <path d="M12 15.500q5 3 10 0l-2 7.500q-4 3-9 0z" fill="#fcd12a" />
          </Svg>
        </button>
        <div className="ml-[13px] flex">
          {taskIcons.map(([n, i]) => (
            <button key={n} aria-label={n} className="flex w-[62px] items-center justify-center">{i}</button>
          ))}
        </div>
        <div className="ml-0.5 flex h-[39px] gap-[3px]">
          {runIcons.map(([n, i]) => (
            <button key={n} aria-label={n} className="flex w-[59px] items-center justify-center rounded-sm border border-[#174c70] bg-gradient-to-br from-[#a8daf0] to-[#4fa5d6] shadow-[inset_0_0_0_1px_#b9e0f3]">{i}</button>
          ))}
        </div>
      </div>
      <div className="flex h-full items-center pb-1 text-white">
        <button aria-label="セキュリティ" className="mr-2.5">
          <Svg s={16}><rect x="1" y="1" width="22" height="22" rx="2" fill="#fff" stroke="#d22" strokeWidth="2" /><circle cx="12" cy="12" r="8.500" fill="#e33b3b" /><path d="M6 11l5 6 9-12" stroke="#fff" strokeWidth="3" /></Svg>
        </button>
        <span className="w-[14px] text-base leading-5">A</span>
        <span className="mr-0.5 text-base leading-5">般</span>
        <div className="flex gap-[3px]">
          {trayIcons.map(([n, i]) => (
            <button key={n} aria-label={n}>{i}</button>
          ))}
        </div>
        <button aria-label="ヘルプ" className="mr-2 ml-1.5 flex h-[15px] w-[15px] items-center justify-center rounded-full border border-[#9fb4e6] bg-[#12128c] text-[11px] leading-3 font-bold">?</button>
        <div className="flex w-7 flex-col text-[9px] leading-3">
          <span>CAPS</span>
          <span>KANA</span>
        </div>
        <div className="flex w-[21px] flex-col items-start gap-1.5">
          <Svg w={8} h={7} vb="0 0 8 7"><path d="M2.500 3V.5h5v3H6M.5 3h5v3.500h-5z" stroke="#fff" /></Svg>
          <Svg w={6} h={3} vb="0 0 6 3"><path d="M0 0h6L3 3z" fill="#fff" /></Svg>
        </div>
        <div className="mt-3 flex h-[18px] w-[18px] items-center justify-center border border-r-0 border-[#dcdcc8] bg-[#f6f2c4]">
          <Svg s={16}><path d="M3 13l7-6v11" stroke="#333" strokeWidth="2" /><path d="M14 18l2-7 5-5 3 3-5 6z" fill="#222" /></Svg>
        </div>
      </div>
    </footer>
  );
}

export default function App() {
  return (
    <div className="flex min-h-screen flex-col border-r border-[#e9e9e9] bg-[#4d4d4e] font-['Noto_Sans','Noto_Sans_CJK_JP',sans-serif]">
      <header className="flex h-6 items-center justify-center border-t border-b border-[#3c3c3d] bg-gradient-to-b from-[#5f5f60] to-[#434344] pl-64">
        <h1 className="text-[13px] leading-4 font-normal whitespace-pre text-[#cfcfcf]">page0014 (A4 210.00 x 297.00mm 製本サイズ:B5 判 182.00 x 257.00mm 600dpi 12.4%)  - CLIP STUDIO PAINT EX</h1>
      </header>
      <nav className="flex h-[25px] items-center border-t border-b border-t-[#97989b] border-b-[#232325] bg-[#7b7c80] pb-1 pl-3.5">
        {menus.map(([m, w]) => (
          <button key={m} className={"text-left text-[13px] leading-5 whitespace-nowrap text-white " + w}>{m}</button>
        ))}
      </nav>
      <div className="flex flex-1">
        <Workspace />
        <Palettes />
        <Strips />
      </div>
      <Taskbar />
    </div>
  );
}
